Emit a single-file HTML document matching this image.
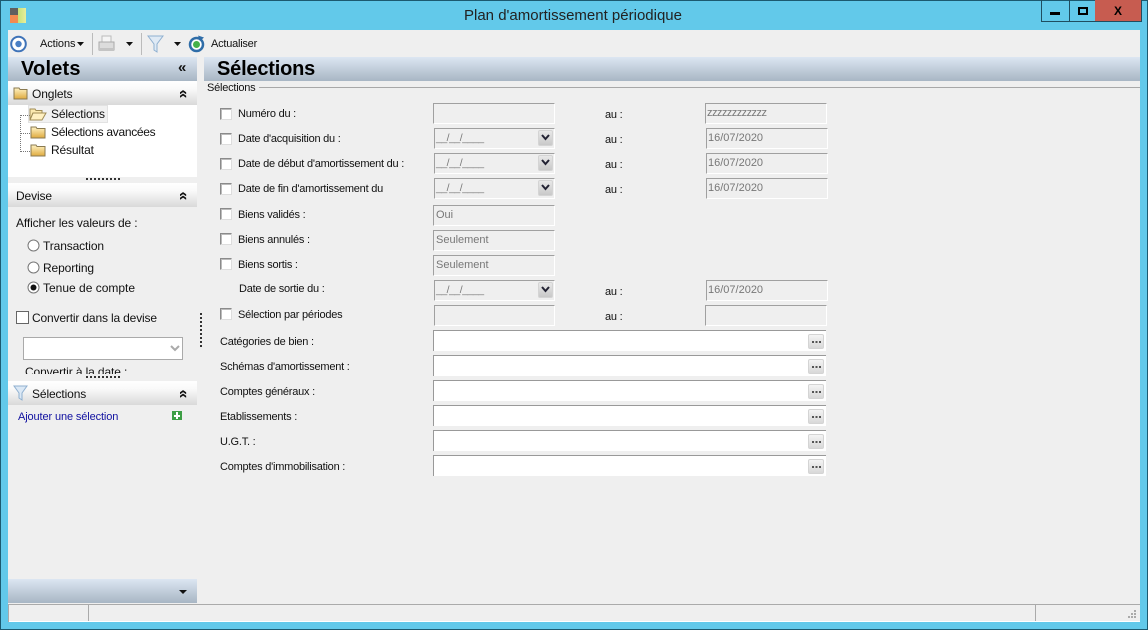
<!DOCTYPE html>
<html lang="fr"><head><meta charset="utf-8"><title>Plan d'amortissement périodique</title>
<style>
html,body{margin:0;padding:0;width:1148px;height:630px;overflow:hidden;background:#62c9ea;font-family:"Liberation Sans",sans-serif;font-size:12px;color:#111}
div,span,svg{position:absolute;box-sizing:border-box}
.t{white-space:nowrap;line-height:14px;height:14px;letter-spacing:-.12px}
.s{font-size:11px;letter-spacing:-.23px}
.cb{width:12px;height:12px;background:#fff;border:1px solid #8a8a8a;border-right-color:#ddd;border-bottom-color:#ddd;box-shadow:inset 1px 1px 0 #bbb}
.f{background:#efefef;border:1px solid #a0a0a0;border-right-color:#fff;border-bottom-color:#fff;height:21px;color:#777;font-size:11px;line-height:19px;padding-left:1px;white-space:nowrap}
.dt{letter-spacing:-.5px;font-size:10.5px}
.w{background:#fff;left:433px;width:393px;height:21px;border-top:1px solid #999;border-left:1px solid #999}
.b{left:808px;width:16px;height:15px;background:linear-gradient(#f4f4f4,#d8d8d8);border:1px solid #d4d4d4;border-radius:2px;font-size:0}
.b:after{content:"";position:absolute;left:3px;top:6px;width:9px;height:2px;background:repeating-linear-gradient(90deg,#555 0 2px,transparent 2px 3.5px)}
.d{width:15px;height:16px;background:linear-gradient(#e8e8e8,#c8c8c8);border:1px solid #d4d4d4;border-radius:2px}
.hd{left:8px;width:189px;height:24px;background:linear-gradient(#fff,#fafafa 30%,#d9d9d9)}
.hb{background:linear-gradient(#dce6f2,#a8b6c4)}
.c{left:176px;width:14px;text-align:center;font-size:16px;line-height:14px;height:14px;transform:rotate(90deg);color:#111;white-space:nowrap;font-weight:bold}
</style></head><body>
<div style="left:0;top:0;width:1148px;height:630px;border:1px solid #1c5a70"></div>
<div style="left:10px;top:8px;width:8px;height:7px;background:#5f5f5f"></div>
<div style="left:10px;top:15px;width:8px;height:8px;background:#f28a50"></div>
<div style="left:18px;top:8px;width:8px;height:15px;background:linear-gradient(90deg,#c6e27a,#e9ee9b)"></div>
<div class="t" style="left:-1px;width:1148px;top:8px;height:16px;line-height:16px;text-align:center;font-size:15px;letter-spacing:0;color:#222">Plan d'amortissement périodique</div>
<div style="left:1041px;top:0;width:101px;height:22px;border:1px solid #1f4d60;border-top:0"></div>
<div style="left:1069px;top:0;width:1px;height:21px;background:#1f4d60"></div>
<div style="left:1095px;top:0;width:46px;height:21px;background:#c75c50"></div>
<div style="left:1050px;top:12px;width:10px;height:3px;background:#000"></div>
<div style="left:1078px;top:7px;width:10px;height:8px;border:2px solid #000"></div>
<div class="t" style="left:1095px;width:46px;top:4px;text-align:center;font-weight:bold;font-size:12px;color:#000">X</div>

<div style="left:8px;top:30px;width:1132px;height:592px;background:#efefef"></div>
<!-- toolbar -->
<svg style="left:10px;top:35px" width="18" height="18" viewBox="0 0 18 18"><circle cx="8.500" cy="9" r="7.300" fill="#fff" stroke="#3f73b8" stroke-width="2"/><circle cx="8.500" cy="9" r="3.200" fill="#4a7fc4"/></svg>
<div class="t s" style="left:40px;top:37px;letter-spacing:-.1px">Actions</div>
<svg style="left:77px;top:42px" width="8" height="5"><path d="M0 0H7L3.500 4Z" fill="#111"/></svg>
<div style="left:92px;top:33px;width:1px;height:22px;background:#bbb"></div>
<svg style="left:97px;top:34px" width="20" height="20" viewBox="0 0 20 20"><path d="M5 2H14V8H5Z" fill="#f5f5f5" stroke="#bbb"/><path d="M2 8H17V16H2Z" fill="#dcdcdc" stroke="#aaa"/><path d="M2 14H17V17H2Z" fill="#c4c4c4"/></svg>
<svg style="left:126px;top:42px" width="8" height="5"><path d="M0 0H7L3.500 4Z" fill="#111"/></svg>
<div style="left:141px;top:33px;width:1px;height:22px;background:#bbb"></div>
<svg style="left:147px;top:35px" width="18" height="18" viewBox="0 0 18 18"><path d="M1 1H16L10 9V17L7 15V9Z" fill="#dfeaf5" stroke="#8fb0d0"/></svg>
<svg style="left:174px;top:42px" width="8" height="5"><path d="M0 0H7L3.500 4Z" fill="#111"/></svg>
<svg style="left:188px;top:35px" width="18" height="18" viewBox="0 0 18 18"><circle cx="8.500" cy="9.500" r="6.500" fill="#fff" stroke="#2f6da8" stroke-width="2.500"/><circle cx="8.500" cy="9.500" r="3.500" fill="#45b14a"/><path d="M10 0.500L16 2.500L12 6Z" fill="#2f6da8"/></svg>
<div class="t s" style="left:211px;top:37px;">Actualiser</div>

<!-- sidebar -->
<div class="hb" style="left:8px;top:57px;width:189px;height:24px"></div>
<div class="t" style="left:21px;top:59px;height:20px;line-height:20px;font-size:20px;letter-spacing:.2px;font-weight:bold;color:#000">Volets</div>
<div class="t" style="left:178px;top:60px;height:16px;line-height:16px;font-size:15px;font-weight:bold;color:#111">«</div>
<div class="hb" style="left:204px;top:57px;width:936px;height:24px"></div>
<div class="t" style="left:217px;top:59px;height:20px;line-height:20px;font-size:20px;letter-spacing:-.2px;font-weight:bold;color:#000">Sélections</div>

<div class="hd" style="top:81px"></div>
<svg style="left:13px;top:86px" width="15" height="14" viewBox="0 0 15 14"><defs><linearGradient id="g" x1="0" y1="0" x2="0" y2="1"><stop offset="0" stop-color="#fff3c4"/><stop offset="1" stop-color="#dfaa3e"/></linearGradient></defs><path d="M1 2H6L7 3.500H14V13H1Z" fill="url(#g)" stroke="#8a7a50"/></svg>
<div class="t" style="left:32px;top:87px">Onglets</div>
<div class="c" style="top:87px">«</div>
<div style="left:8px;top:105px;width:189px;height:72px;background:#fff"></div>
<div style="left:28px;top:105px;width:80px;height:18px;background:#f1f1f1;border:1px solid #e2e2e2"></div>
<div style="left:20px;top:115px;width:1px;height:37px;border-left:1px dotted #777"></div>
<div style="left:20px;top:115px;width:10px;border-top:1px dotted #777"></div>
<div style="left:20px;top:133px;width:10px;border-top:1px dotted #777"></div>
<div style="left:20px;top:151px;width:10px;border-top:1px dotted #777"></div>
<svg style="left:29px;top:107px" width="18" height="14" viewBox="0 0 18 14"><path d="M1 2H6L7 3.500H13V6H4L1 13Z" fill="#fbe9ae" stroke="#a08c55"/><path d="M4 6H17L13 13H1Z" fill="#fff0c0" stroke="#a08c55"/></svg>
<svg style="left:30px;top:125px" width="16" height="14" viewBox="0 0 16 14"><path d="M1 2H6L7 3.500H15V13H1Z" fill="url(#g)" stroke="#8a7a50"/></svg>
<svg style="left:30px;top:143px" width="16" height="14" viewBox="0 0 16 14"><path d="M1 2H6L7 3.500H15V13H1Z" fill="url(#g)" stroke="#8a7a50"/></svg>
<div class="t" style="left:51px;top:107px;letter-spacing:-.15px">Sélections</div>
<div class="t" style="left:51px;top:125px;letter-spacing:-.3px">Sélections avancées</div>
<div class="t" style="left:51px;top:143px;letter-spacing:-.15px">Résultat</div>
<div style="left:86px;top:178px;width:34px;height:2px;background:repeating-linear-gradient(90deg,#333 0 2px,transparent 2px 4px)"></div>

<div class="hd" style="top:183px"></div>
<div class="t" style="left:16px;top:189px">Devise</div>
<div class="c" style="top:189px">«</div>
<div class="t" style="left:16px;top:216px">Afficher les valeurs de :</div>
<svg style="left:27px;top:239px" width="13" height="13"><circle cx="6.500" cy="6.500" r="5.500" fill="#fff" stroke="#777"/></svg>
<div class="t" style="left:43px;top:239px">Transaction</div>
<svg style="left:27px;top:261px" width="13" height="13"><circle cx="6.500" cy="6.500" r="5.500" fill="#fff" stroke="#777"/></svg>
<div class="t" style="left:43px;top:261px">Reporting</div>
<svg style="left:27px;top:281px" width="13" height="13"><circle cx="6.500" cy="6.500" r="5.500" fill="#fff" stroke="#777"/><circle cx="6.500" cy="6.500" r="3" fill="#111"/></svg>
<div class="t" style="left:43px;top:281px;letter-spacing:0">Tenue de compte</div>
<div style="left:16px;top:311px;width:13px;height:13px;background:#fff;border:1px solid #666"></div>
<div class="t" style="left:32px;top:311px;letter-spacing:-.16px">Convertir dans la devise</div>
<div style="left:23px;top:337px;width:160px;height:23px;background:#fff;border:1px solid #aaa"></div>
<svg style="left:170px;top:345px" width="10" height="8"><path d="M1 1L5 5L9 1" fill="none" stroke="#aaa" stroke-width="2"/></svg>
<div class="t" style="left:25px;top:365px">Convertir à la date :</div>
<div style="left:8px;top:374px;width:189px;height:7px;background:#efefef"></div>
<div style="left:86px;top:376px;width:34px;height:2px;background:repeating-linear-gradient(90deg,#333 0 2px,transparent 2px 4px)"></div>
<div style="left:200px;top:313px;width:2px;height:34px;background:repeating-linear-gradient(#333 0 2px,transparent 2px 4px)"></div>

<div class="hd" style="top:381px"></div>
<svg style="left:13px;top:385px" width="15" height="16" viewBox="0 0 15 16"><path d="M1 1H14L9 8V15L6 13V8Z" fill="#dbe8f5" stroke="#8fb0d0"/></svg>
<div class="t" style="left:32px;top:387px">Sélections</div>
<div class="c" style="top:387px">«</div>
<div class="t s" style="left:18px;top:410px;color:#1010a0;letter-spacing:-.12px">Ajouter une sélection</div>
<div style="left:172px;top:411px;width:10px;height:9px;background:#3d9e45"></div>
<div style="left:174px;top:415px;width:6px;height:2px;background:#fff"></div>
<div style="left:176px;top:412px;width:2px;height:7px;background:#fff"></div>

<div class="hb" style="left:8px;top:579px;width:189px;height:24px"></div>
<svg style="left:179px;top:590px" width="9" height="5"><path d="M0 0H8L4 4Z" fill="#111"/></svg>

<!-- form -->
<div class="t s" style="left:207px;top:81px">Sélections</div>
<div style="left:259px;top:87px;width:881px;height:1px;background:#a8a8a8"></div>

<div class="cb" style="left:220px;top:108px"></div><div class="t s" style="left:238px;top:107px">Numéro du :</div>
<div class="cb" style="left:220px;top:133px"></div><div class="t s" style="left:238px;top:132px">Date d'acquisition du :</div>
<div class="cb" style="left:220px;top:158px"></div><div class="t s" style="left:238px;top:157px">Date de début d'amortissement du :</div>
<div class="cb" style="left:220px;top:183px"></div><div class="t s" style="left:238px;top:182px">Date de fin d'amortissement du</div>
<div class="cb" style="left:220px;top:208px"></div><div class="t s" style="left:238px;top:208px">Biens validés :</div>
<div class="cb" style="left:220px;top:233px"></div><div class="t s" style="left:238px;top:233px">Biens annulés :</div>
<div class="cb" style="left:220px;top:258px"></div><div class="t s" style="left:238px;top:258px">Biens sortis :</div>
<div class="t s" style="left:239px;top:282px">Date de sortie du :</div>
<div class="cb" style="left:220px;top:308px"></div><div class="t s" style="left:238px;top:308px">Sélection par périodes</div>
<div class="t s" style="left:220px;top:335px">Catégories de bien :</div>
<div class="t s" style="left:220px;top:360px">Schémas d'amortissement :</div>
<div class="t s" style="left:220px;top:385px">Comptes généraux :</div>
<div class="t s" style="left:220px;top:410px">Etablissements :</div>
<div class="t s" style="left:220px;top:435px">U.G.T. :</div>
<div class="t s" style="left:220px;top:460px">Comptes d'immobilisation :</div>

<div class="f" style="left:433px;top:103px;width:122px"></div>
<div class="f dt" style="left:434px;top:128px;width:121px">__/__/____</div><div class="d" style="left:538px;top:130px"></div>
<div class="f dt" style="left:434px;top:153px;width:121px">__/__/____</div><div class="d" style="left:538px;top:155px"></div>
<div class="f dt" style="left:434px;top:178px;width:121px">__/__/____</div><div class="d" style="left:538px;top:180px"></div>
<svg style="left:540px;top:134px" width="11" height="8"><path d="M2 1L5.500 5L9 1" fill="none" stroke="#223" stroke-width="2"/></svg>
<svg style="left:540px;top:159px" width="11" height="8"><path d="M2 1L5.500 5L9 1" fill="none" stroke="#223" stroke-width="2"/></svg>
<svg style="left:540px;top:184px" width="11" height="8"><path d="M2 1L5.500 5L9 1" fill="none" stroke="#223" stroke-width="2"/></svg>
<div class="f" style="left:433px;top:205px;width:122px;padding-left:2px">Oui</div>
<div class="f" style="left:433px;top:230px;width:122px;padding-left:2px">Seulement</div>
<div class="f" style="left:433px;top:255px;width:122px;padding-left:2px">Seulement</div>
<div class="f dt" style="left:434px;top:280px;width:121px">__/__/____</div><div class="d" style="left:538px;top:282px"></div>
<svg style="left:540px;top:286px" width="11" height="8"><path d="M2 1L5.500 5L9 1" fill="none" stroke="#223" stroke-width="2"/></svg>
<div class="f" style="left:434px;top:305px;width:121px"></div>

<div class="t s" style="left:605px;top:108px">au :</div>
<div class="t s" style="left:605px;top:133px">au :</div>
<div class="t s" style="left:605px;top:158px">au :</div>
<div class="t s" style="left:605px;top:183px">au :</div>
<div class="t s" style="left:605px;top:285px">au :</div>
<div class="t s" style="left:605px;top:310px">au :</div>

<div class="f" style="left:705px;top:103px;width:122px;letter-spacing:-.55px">zzzzzzzzzzzz</div>
<div class="f" style="left:706px;top:128px;width:122px">16/07/2020</div>
<div class="f" style="left:706px;top:153px;width:122px">16/07/2020</div>
<div class="f" style="left:706px;top:178px;width:122px">16/07/2020</div>
<div class="f" style="left:706px;top:280px;width:122px">16/07/2020</div>
<div class="f" style="left:705px;top:305px;width:122px"></div>

<div class="w" style="top:330px"></div><div class="b" style="top:334px"></div>
<div class="w" style="top:355px"></div><div class="b" style="top:359px"></div>
<div class="w" style="top:380px"></div><div class="b" style="top:384px"></div>
<div class="w" style="top:405px"></div><div class="b" style="top:409px"></div>
<div class="w" style="top:430px"></div><div class="b" style="top:434px"></div>
<div class="w" style="top:455px"></div><div class="b" style="top:459px"></div>

<!-- status bar -->
<div style="left:8px;top:604px;width:1132px;height:18px;border-top:1px solid #aaa;border-bottom:1px solid #fff"></div>
<div style="left:8px;top:604px;width:1px;height:18px;background:#aaa"></div>
<div style="left:88px;top:604px;width:1px;height:17px;background:#aaa"></div>
<div style="left:1035px;top:604px;width:1px;height:17px;background:#aaa"></div>
<svg style="left:1125px;top:609px" width="12" height="12"><path d="M9 1h2v2H9zM6 4h2v2H6zM9 4h2v2H9zM3 7h2v2H3zM6 7h2v2H6zM9 7h2v2H9z" fill="#aaa"/></svg>
</body></html>
